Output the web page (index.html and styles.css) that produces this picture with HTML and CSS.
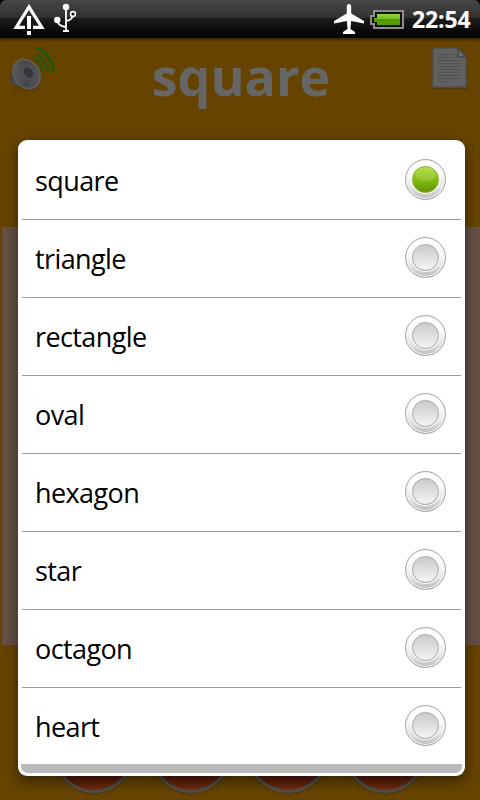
FILE: index.html
```html
<!DOCTYPE html>
<html lang="en">
<head>
  <meta charset="UTF-8" />
  <meta name="viewport" content="width=device-width, initial-scale=1" />
  <title>Shapes</title>
  <link rel="stylesheet" href="styles.css">
</head>
<body>
  <div class="status-bar">
    <svg class="warning-icon" width="32" height="36" viewBox="0 0 32 36">
      <path d="M12 27.300H3.200L16 7l12.800 20.300H20" fill="none" stroke="#fff" stroke-width="3.200" />
      <path d="M14 16h4v13h-4zM14 31h4v4h-4z" fill="#fff" />
    </svg>
    <svg class="usb-icon" width="24" height="32" viewBox="0 0 24 32">
      <path d="M12 6v24M9 31h6M3 19q0 7 9 8M19 14q0 6-7 7" fill="none" stroke="#fff" stroke-width="1.800" />
      <circle cx="12" cy="7" r="3.200" fill="#fff" />
      <circle cx="3.300" cy="20" r="3.200" fill="#fff" />
      <circle cx="19" cy="14" r="2.400" fill="#111" stroke="#fff" stroke-width="1.600" />
    </svg>
    <span class="spacer"></span>
    <svg class="plane-icon" width="32" height="32" viewBox="0 0 32 32">
      <path d="M16 3q2.200 0 2.200 3v6.500L31 20v2.500L18.200 20l-.8 8 4.600 3v2H10v-2l4.600-3-.8-8L1 22.500V20l12.800-7.500V6q0-3 2.200-3z" fill="#fff" />
    </svg>
    <svg class="battery-icon" width="34" height="20" viewBox="0 0 34 20">
      <defs>
        <linearGradient id="charge" x2="0" y2="1">
          <stop offset="0" stop-color="#8fd43a" />
          <stop offset=".5" stop-color="#71bd20" />
          <stop offset=".5" stop-color="#529804" />
          <stop offset="1" stop-color="#56a004" />
        </linearGradient>
      </defs>
      <path d="M4 1h29v17H4v-4H1V6h3z" fill="#111" stroke="#8d8d8d" stroke-width="2" />
      <path d="M7 4h23v11H7v-3H4V8h3z" fill="url(#charge)" />
    </svg>
    <span class="clock">22:54</span>
  </div>

  <div class="app">
    <div class="header">
      <svg class="speaker-icon" width="50" height="50" viewBox="0 0 50 50">
        <defs>
          <linearGradient id="cone" x2="1" y2="1">
            <stop offset="0" stop-color="#626264" />
            <stop offset=".5" stop-color="#46464a" />
            <stop offset="1" stop-color="#5a5a5e" />
          </linearGradient>
        </defs>
        <ellipse cx="18" cy="45" rx="14" ry="3" fill="#5c3d00" />
        <path d="M5 26q-5 10-1 15l14 4-5-22z" fill="#454549" />
        <ellipse cx="18.500" cy="31" rx="12.500" ry="15.500" transform="rotate(-35 18.500 31)" fill="url(#cone)" stroke="#5e5e60" stroke-width="1.600" />
        <ellipse cx="19.500" cy="29.500" rx="7" ry="9" transform="rotate(-35 19.500 29.500)" fill="#4d4d52" />
        <ellipse cx="20.500" cy="29.500" rx="4" ry="5.500" transform="rotate(-35 20.500 29.500)" fill="#34343a" />
        <g fill="none" stroke="#20580f" stroke-width="2.400">
          <path d="M26 16q7 3 9 12" />
          <path d="M27 11q10 4 13 17" />
          <path d="M29 5q14 6 17 24" stroke-width="3" />
        </g>
      </svg>
      <h1>square</h1>
      <svg class="note-icon" width="42" height="46" viewBox="0 0 42 46">
        <path d="M3 41h37v2H3z" fill="#543700" />
        <path d="M5 2h25l8 9v30H5z" fill="#616161" stroke="#505050" stroke-width="1.500" />
        <path d="M30 2v9h8z" fill="#6b6b6b" stroke="#484848" stroke-width="1.500" />
        <path d="M10 8.500h16M10 11.500h16M10 14.500h22M10 17.500h22M10 20.500h22M10 23.500h22M10 26.500h22M10 29.500h22M10 32.500h22M10 35.500h11" stroke="#525252" />
      </svg>
    </div>
    <div class="picture"></div>
    <div class="buttons">
      <span class="round-button"></span>
      <span class="round-button"></span>
      <span class="round-button"></span>
      <span class="round-button"></span>
    </div>
  </div>

  <div class="dialog">
    <ul class="options">
      <li><span>square</span><i class="radio checked"></i></li>
      <li><span>triangle</span><i class="radio"></i></li>
      <li><span>rectangle</span><i class="radio"></i></li>
      <li><span>oval</span><i class="radio"></i></li>
      <li><span>hexagon</span><i class="radio"></i></li>
      <li><span>star</span><i class="radio"></i></li>
      <li><span>octagon</span><i class="radio"></i></li>
      <li><span>heart</span><i class="radio"></i></li>
    </ul>
    <div class="dialog-footer"></div>
  </div>
</body>
</html>
```
FILE: styles.css
```css
* {
  box-sizing: border-box;
}

body {
  margin: 0;
  width: 480px;
  height: 800px;
  overflow: hidden;
  position: relative;
  background: #000;
  font-family: "Open Sans", "Noto Sans", sans-serif;
}

.status-bar {
  display: flex;
  align-items: flex-start;
  height: 38px;
  padding: 0 9px 0 13px;
  border-radius: 6px 6px 0 0;
  background: linear-gradient(#484848, #303030 47%, #1c1c1c 48%, #000);
}

.usb-icon {
  margin-left: 9px;
}

.spacer {
  flex: 1;
}

.plane-icon {
  margin-top: 1px;
  overflow: visible;
}

.battery-icon {
  margin: 10px 8px 0 5px;
}

.clock {
  color: #fff;
  font-size: 23px;
  font-weight: bold;
  line-height: 39px;
  width: 59px;
  letter-spacing: -0.1px;
  white-space: nowrap;
}

.app {
  height: 762px;
  background: #664400;
  box-shadow: inset 0 4px 3px -2px #3a2600;
}

.header {
  display: flex;
  justify-content: space-between;
  height: 189px;
  padding: 5px 10px 0 8px;
}

h1 {
  margin: 0 4px 0 0;
  color: #666;
  font-size: 52px;
  line-height: 66px;
}

.note-icon {
  margin-top: 3px;
}

.picture {
  height: 418px;
  margin-left: 2px;
  background: #665044;
}

.buttons {
  display: flex;
  gap: 15px;
  padding: 66px 0 0 53px;
}

.round-button {
  width: 82px;
  height: 82px;
  border: 3px solid #50504c;
  border-radius: 50%;
  background: linear-gradient(#3c1004 70%, #742c0e);
  box-shadow: 0 0 2px #332200;
}

.dialog {
  position: absolute;
  left: 18px;
  top: 140px;
  width: 447px;
  height: 636px;
  padding: 2px 3px 3px;
  border-radius: 9px;
  background: #fff;
  box-shadow: 0 5px 14px rgba(0, 0, 0, 0.5);
}

.options {
  margin: 0 1px;
  padding: 0;
  list-style: none;
}

.options li {
  display: flex;
  justify-content: space-between;
  align-items: flex-start;
  height: 78px;
  padding: 17px 15px 0 13px;
  border-bottom: 1px solid #9c9c9c;
  font-size: 27px;
  line-height: 43px;
  letter-spacing: -0.6px;
}

.options li:last-child {
  height: 76px;
  border-bottom: none;
}

.radio {
  display: flex;
  width: 41px;
  height: 41px;
  padding: 5px;
  border: 1px solid #a5a5a5;
  border-radius: 50%;
  background: linear-gradient(#fff 30%, #e6e6e6 70%, #bbb);
  box-shadow: inset 0 0 0 1px #f4f4f4;
}

.radio::before {
  content: "";
  flex: 1;
  margin: 1px;
  border: 1px solid #a6a6a6;
  border-radius: 50%;
  background: linear-gradient(#cbcbcb, #f4f4f4);
  box-shadow: 0 0 0 1px #f8f8f8;
}

.radio.checked::before {
  border-color: #7fae28;
  background: radial-gradient(ellipse 11px 7px at 50% 28%, rgba(255, 255, 255, 0.15) 95%, transparent), linear-gradient(#a4dc26, #82bb12 50%, #67960c);
}

.dialog-footer {
  height: 9px;
  border-radius: 0 0 7px 7px;
  background: #bababa;
}
```
